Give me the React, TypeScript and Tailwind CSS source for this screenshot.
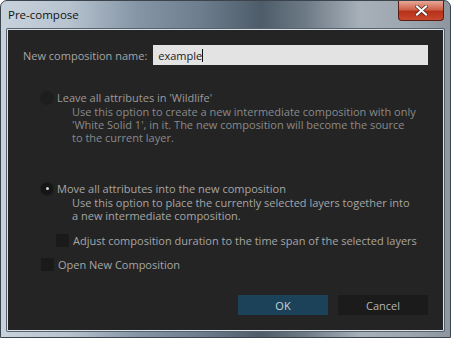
import React from "react";

const font = { fontFamily: '"Open Sans", "Noto Sans", sans-serif' };

export default function App() {
  return (
    <div className="w-[451px] h-[338px] overflow-hidden bg-white">
      <div
        className="relative w-[451px] h-[338px] rounded-t-[7px] border border-[#3b434c] flex flex-col"
        style={{
          background:
            "linear-gradient(90deg, #c7d2dc 0%, #b7c3cf 15%, #8696a6 30%, #6c7c8c 45%, #4e5c69 58%, #6e7b87 68%, #a7b0b9 80%, #9ea7b0 90%, #8d969f 100%)",
        }}
      >
        {/* title bar */}
        <div className="h-[28px] flex items-center pl-[7px] shrink-0">
          <span className="text-[11.5px] text-[#111]" style={font}>
            Pre-compose
          </span>
        </div>
        <div className="absolute right-[6px] top-0 w-[46px] h-[20px] rounded-b-[4px] border border-[#5a1d14] border-t-0 flex items-center justify-center"
          style={{ background: "linear-gradient(180deg,#e8a797 0%,#d0624a 45%,#b6321b 55%,#c9472b 100%)" }}>
          <svg width="13" height="11" viewBox="0 0 13 11">
            <path d="M2 1.5 L11 9.5 M11 1.5 L2 9.5" stroke="#3a1a14" strokeWidth="3.4" strokeLinecap="square" />
            <path d="M2 1.5 L11 9.5 M11 1.5 L2 9.5" stroke="#ffffff" strokeWidth="2.2" strokeLinecap="square" />
          </svg>
        </div>
        {/* client */}
        <div className="flex-1 mx-[6px] mb-[6px] border border-[#d9e1e9] rounded-[1px] shadow-[0_0_0_1px_#55606b]">
          <div className="w-full h-full bg-[#242424] flex flex-col text-[11px] leading-[13px] text-[#a6a6a6] whitespace-nowrap" style={font}>
            <div className="flex items-center pt-[15px] pl-[15px] pr-[15px]">
              <span className="mr-[6px]">New composition name:</span>
              <div className="flex-1 h-[20px] bg-[#e3e3e3] flex items-center pl-[5px] text-[#222]">
                example<span className="inline-block w-px h-[13px] bg-[#111]" />
              </div>
            </div>

            <div className="mt-[26px] pl-[33px] flex items-center">
              <span className="w-[12px] h-[12px] rounded-full bg-[#1e1e1e] shadow-[0_0_2px_#161616] mr-[4px]" />
              <span className="text-[#9b9b9b]">Leave all attributes in 'Wildlife'</span>
            </div>
            <div className="pl-[64px] pt-[1px] text-[#8a8a8a]">
              <div>Use this option to create a new intermediate composition with only</div>
              <div>'White Solid 1', in it. The new composition will become the source</div>
              <div>to the current layer.</div>
            </div>

            <div className="mt-[38px] pl-[33px] flex items-center">
              <span className="w-[12px] h-[12px] rounded-full bg-[#161616] shadow-[0_0_2px_#111] mr-[4px] flex items-center justify-center">
                <span className="w-[3px] h-[3px] rounded-full bg-[#d8d8d8]" />
              </span>
              <span>Move all attributes into the new composition</span>
            </div>
            <div className="pl-[64px] pt-[1px]">
              <div>Use this option to place the currently selected layers together into</div>
              <div>a new intermediate composition.</div>
            </div>

            <div className="mt-[12px] pl-[48px] flex items-center">
              <span className="w-[13px] h-[13px] bg-[#1a1a1a] mr-[4px]" />
              <span>Adjust composition duration to the time span of the selected layers</span>
            </div>

            <div className="mt-[11px] pl-[33px] flex items-center">
              <span className="w-[13px] h-[13px] bg-[#1a1a1a] mr-[4px]" />
              <span>Open New Composition</span>
            </div>

            <div className="mt-auto mb-[15px] flex justify-end gap-[10px] pr-[15px]">
              <button className="w-[90px] h-[20px] bg-[#1c4259] text-[#c9d3d9] text-[11px]" style={font}>OK</button>
              <button className="w-[90px] h-[20px] bg-[#1b1b1b] text-[#b5b5b5] text-[11px]" style={font}>Cancel</button>
            </div>
          </div>
        </div>
      </div>
    </div>
  );
}
